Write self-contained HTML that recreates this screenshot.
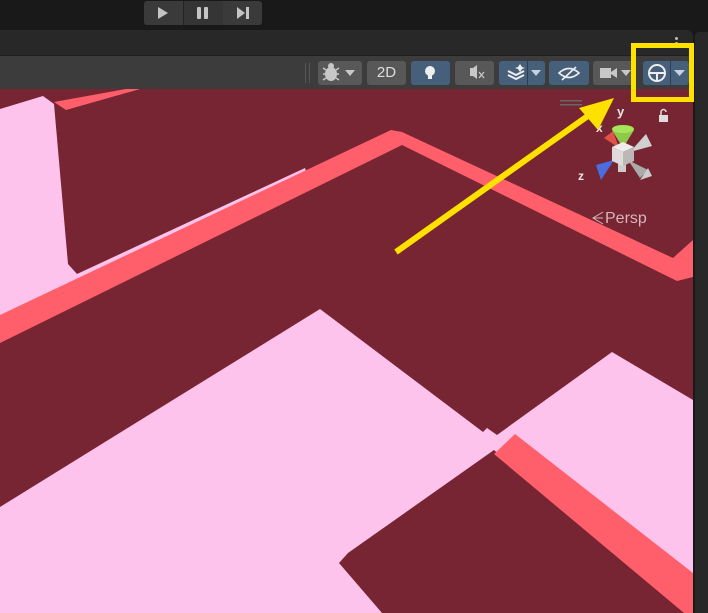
<!DOCTYPE html>
<html><head><style>
body{margin:0;width:708px;height:613px;overflow:hidden;background:#191919;font-family:"Liberation Sans",sans-serif;position:relative}
.a{position:absolute}
.b{position:absolute;top:61px;height:24px;border-radius:3px;background:#585858}
.bl{background:#46607c}
</style></head><body>
<div class="a" style="left:0;top:30px;width:693px;height:26px;background:#282828;border-radius:0 6px 0 0"></div>
<div class="a" style="left:0;top:55px;width:693px;height:1px;background:#1e1e1e"></div>
<div class="a" style="left:0;top:56px;width:693px;height:33px;background:#3c3c3c"></div>
<div class="a" style="left:695px;top:32px;width:13px;height:581px;background:#282828;border-radius:4px 0 0 0"></div>
<div class="a" style="left:144px;top:1px;width:118px;height:24px;background:#3a3a3a;border-radius:3px"></div>
<div class="a" style="left:183px;top:1px;width:40px;height:24px;background:#353535"></div>
<div class="a" style="left:183px;top:1px;width:1px;height:24px;background:#222"></div>
<svg class="a" style="left:144px;top:1px" width="120" height="24">
<polygon points="14,6 14,18 24,12" fill="#c4c4c4"/>
<rect x="53" y="6" width="4" height="12" rx="1" fill="#c4c4c4"/><rect x="60" y="6" width="4" height="12" rx="1" fill="#c4c4c4"/>
<polygon points="93,6 93,18 101,12" fill="#c4c4c4"/><rect x="102" y="6" width="3" height="12" fill="#c4c4c4"/>
</svg>
<div class="a" style="left:675px;top:37px;width:3px;height:3px;background:#bbb;border-radius:50%"></div>
<div class="a" style="left:675px;top:42px;width:3px;height:3px;background:#bbb;border-radius:50%"></div>
<div class="a" style="left:305px;top:63px;width:1px;height:20px;background:#555"></div>
<div class="a" style="left:309px;top:63px;width:1px;height:20px;background:#555"></div>
<div class="b" style="left:318px;width:44px"></div>
<div class="b" style="left:367px;width:39px;color:#ddd;font-size:15px;text-align:center;line-height:24px">2D</div>
<div class="b bl" style="left:411px;width:39px"></div>
<div class="b" style="left:455px;width:39px"></div>
<div class="b bl" style="left:499px;width:46px"></div>
<div class="a" style="left:527px;top:61px;width:1px;height:24px;background:#2d3e50"></div>
<div class="b bl" style="left:549px;width:40px"></div>
<div class="b" style="left:593px;width:43px"></div>
<div class="b bl" style="left:643px;width:46px"></div>
<div class="a" style="left:670px;top:61px;width:1px;height:24px;background:#2d3e50"></div>
<svg class="a" style="left:0;top:0" width="708" height="100">
<g fill="#c8c8c8">
<ellipse cx="331" cy="74" rx="6" ry="7"/><circle cx="331" cy="66" r="3"/>
<path d="M323 68l3 2M323 74h3M323 80l3-2M339 68l-3 2M339 74h-3M339 80l-3-2" stroke="#c8c8c8" stroke-width="1.5"/>
<polygon points="345,70 355,70 350,76"/>
<circle cx="430" cy="71" r="5" fill="#eee"/><rect x="428" y="75" width="4" height="4" fill="#eee"/>
<rect x="470" y="68" width="3" height="8"/><polygon points="473,68 477,65 477,79 473,76"/>
<path d="M479 72l5 6M484 72l-5 6" stroke="#c8c8c8" stroke-width="1.3"/>
<path d="M508 75l8 4 8-4M508 71l8 4 8-4" stroke="#eee" stroke-width="2" fill="none"/><polygon points="520,64 522,67 525,68 522,69 520,72 518,69 515,68 518,67" fill="#eee"/>
<polygon points="531,70 541,70 536,76" fill="#c8d2de"/>
<path d="M559 73q10-9 20 0q-10 9-20 0z" stroke="#eee" stroke-width="1.6" fill="none"/><path d="M562 80l14-13" stroke="#eee" stroke-width="1.6"/>
<rect x="600" y="68" width="11" height="10"/><polygon points="611,72 617,68 617,78 611,74"/>
<polygon points="621,70 631,70 626,76"/>
<circle cx="657" cy="73" r="8" stroke="#eee" stroke-width="2" fill="none"/><path d="M649 73h16M657 73v8" stroke="#eee" stroke-width="2"/>
<polygon points="674,70 685,70 679.5,76" fill="#c8d2de"/>
</g>
</svg>
<svg class="a" style="left:0;top:89px" width="693" height="524" viewBox="0 89 693 524">
<rect x="0" y="89" width="693" height="524" fill="#772532"/>
<polygon points="0,109 43,96 54,104 68,264 77,274 305,168 306,171 0,320" fill="#fec3ec"/>
<polygon points="54,102 126,89 140,89 66,110" fill="#ff5f6a"/>
<polygon points="0,315 391,130 402,132 673,258 693,240 693,277 677,281 402,145 0,343" fill="#ff5f6a"/>
<polygon points="0,507 320,309 483,432 487,428 497,435 612,352 693,400 693,613 0,613" fill="#fec3ec"/>
<polygon points="494,450 348,553 339,563 382,613 686,613" fill="#772532"/>
<polygon points="515,434 693,573 693,613 684,613 494,454" fill="#ff5f6a"/>
<rect x="560" y="100" width="22" height="1.5" fill="#666"/><rect x="560" y="104" width="22" height="1.5" fill="#666"/>
<!-- gizmo -->
<polygon points="604,138 613,131 619,148" fill="#e0524a"/>
<polygon points="612,130 634,130 623,148" fill="#8ec94a"/><ellipse cx="623" cy="129" rx="11" ry="4" fill="#a6e45a"/>
<polygon points="646,134 652,146 630,152" fill="#d0d0d0"/>
<polygon points="628,160 648,170 640,178" fill="#aaa"/><polygon points="648,168 652,176 640,180" fill="#ccc"/>
<polygon points="614,160 596,165 601,180" fill="#4a6ee0"/>
<rect x="618" y="162" width="8" height="10" fill="#ccc"/>
<polygon points="612,147 623,142 634,147 623,152" fill="#f0ecec"/>
<polygon points="612,147 623,152 623,166 612,161" fill="#e0dada"/>
<polygon points="623,152 634,147 634,161 623,166" fill="#bdb7b7"/>
<text x="617" y="116" fill="#e6e6e6" font-size="13" font-weight="bold">y</text>
<text x="596" y="132" fill="#e6e6e6" font-size="12" font-weight="bold">x</text>
<text x="578" y="180" fill="#e6e6e6" font-size="12" font-weight="bold">z</text>
<rect x="659" y="115" width="9" height="7" fill="#ddd"/><path d="M661 115v-3a2.5 2.5 0 0 1 5 0" stroke="#ddd" stroke-width="1.5" fill="none"/>
<path d="M603 212l-10 6 10 6" stroke="#d7b6bb" stroke-width="1" fill="none"/><path d="M593 218h10" stroke="#d7b6bb"/>
<text x="605" y="223" fill="#d7b6bb" font-size="16">Persp</text>
<!-- arrow -->
<line x1="396" y1="252" x2="592" y2="113" stroke="#ffe100" stroke-width="6"/>
<polygon points="614,98 579,108 598,130" fill="#ffe100"/>
</svg>
<div class="a" style="left:631px;top:43px;width:53px;height:49px;border:5px solid #ffe100"></div>
</body></html>
